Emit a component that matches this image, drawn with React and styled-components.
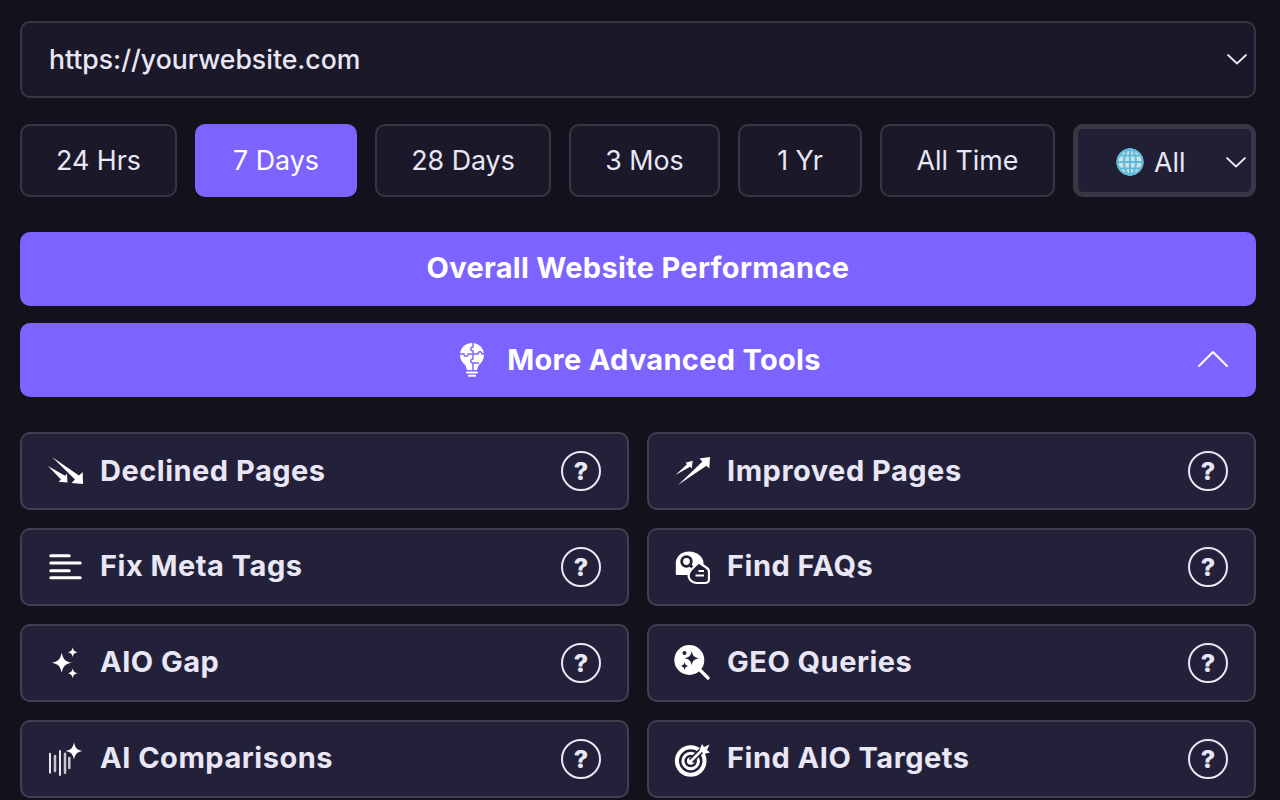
import React from "react";
import styled, { createGlobalStyle } from "styled-components";

const Global = createGlobalStyle`
  html, body { margin: 0; padding: 0; height: 800px; overflow: hidden; background: #13121c; }
  #root { height: 800px; overflow: hidden; }
  * { box-sizing: border-box; }
`;

const Page = styled.div`
  font-family: Inter, "Liberation Sans", sans-serif;
  padding: 21px 24px 0 20px;
  width: 1280px;
  display: flex;
  flex-direction: column;
  color: #e9e6f5;
`;

const UrlSelect = styled.div`
  height: 77px;
  border: 2px solid #383644;
  border-radius: 10px;
  background: #1b1929;
  display: flex;
  align-items: center;
  justify-content: space-between;
  padding: 0 5px 2px 27px;
  font-size: 26.6px;
  font-weight: 500;
  margin-bottom: 26px;
`;

const Chevron = styled.svg`
  width: 24px;
  height: 24px;
  fill: none;
  stroke: #e9e6f5;
  stroke-width: 1.8;
  stroke-linecap: round;
  stroke-linejoin: round;
  flex: none;
`;

const Ranges = styled.div`
  display: flex;
  gap: 18px;
  margin-bottom: 35px;
`;

const Range = styled.div`
  height: 73px;
  width: ${(p) => p.$w}px;
  border-radius: 10px;
  border: 2px solid ${(p) => (p.$active ? "#7d63ff" : "#383644")};
  background: ${(p) => (p.$active ? "#7d63ff" : "#1b1929")};
  color: ${(p) => (p.$active ? "#fff" : "#e9e6f5")};
  display: flex;
  align-items: center;
  justify-content: center;
  font-size: 26.8px;
  padding-bottom: 1px;
  white-space: nowrap;
`;

const Region = styled.div`
  flex: 1;
  height: 73px;
  border-radius: 10px;
  border: 5px solid #393746;
  background: #211f33;
  display: flex;
  align-items: center;
  padding: 2px 3px 0 38px;
  font-size: 26.8px;
`;

const Globe = styled.svg`
  width: 28px;
  height: 28px;
  margin-right: 10px;
  flex: none;
`;

const RegionText = styled.span`
  flex: 1;
`;

const Banner = styled.div`
  height: 74px;
  border-radius: 10px;
  background: #7d63ff;
  color: #fff;
  display: flex;
  align-items: center;
  justify-content: center;
  font-size: 29px;
  font-weight: 700;
  letter-spacing: 0.3px;
  padding-bottom: ${(p) => p.$pb}px;
  margin-bottom: ${(p) => p.$mb}px;
  position: relative;
`;

const BulbIcon = styled.svg`
  width: 30px;
  height: 36px;
  margin-right: 20px;
  margin-left: 2px;
  margin-top: 2px;
  flex: none;
`;

const Collapse = styled.svg`
  position: absolute;
  right: 27px;
  top: 26px;
  width: 32px;
  height: 20px;
  fill: none;
  stroke: #fff;
  stroke-width: 2;
  stroke-linecap: round;
  stroke-linejoin: round;
`;

const Tools = styled.div`
  display: grid;
  grid-template-columns: 1fr 1fr;
  column-gap: 18px;
  row-gap: 17.9px;
`;

const Tool = styled.div`
  height: 78px;
  border: 2px solid #413f50;
  border-radius: 10px;
  background: #232139;
  display: flex;
  align-items: center;
  padding: 0 26px 0 25px;
  color: #e9e6f5;
  font-size: 29px;
  font-weight: 700;
  letter-spacing: 0.5px;
`;

const ToolIcon = styled.svg`
  width: 36px;
  height: 36px;
  margin-right: 17px;
  flex: none;
  color: #fff;
`;

const ToolName = styled.span`
  flex: 1;
  white-space: nowrap;
  padding-bottom: 2px;
`;

const Help = styled.div`
  width: 40px;
  height: 40px;
  border: 2px solid #e9e6f5;
  border-radius: 50%;
  display: flex;
  align-items: center;
  justify-content: center;
  font-size: 25px;
  font-weight: 800;
  letter-spacing: 0;
  flex: none;
`;

const star = (cx, cy, r) => {
  const k = r * 0.16;
  return `M${cx} ${cy - r} C${cx + k} ${cy - k * 2} ${cx + k * 2} ${cy - k} ${cx + r} ${cy} C${cx + k * 2} ${cy + k} ${cx + k} ${cy + k * 2} ${cx} ${cy + r} C${cx - k} ${cy + k * 2} ${cx - k * 2} ${cy + k} ${cx - r} ${cy} C${cx - k * 2} ${cy - k} ${cx - k} ${cy - k * 2} ${cx} ${cy - r}Z`;
};

const icons = {
  declined: (
    <g fill="currentColor" stroke="none">
      <path d="M5 4 L32 22.500 L35.700 19 L36 31 L24.500 30 L28 26.500 Z" />
      <path d="M1 13 L18 22.700 L20 20.700 L20.500 29.500 L11.500 28.700 L14 26.500 Z" />
    </g>
  ),
  improved: (
    <g fill="currentColor" stroke="none">
      <path d="M36 4 L35.300 15.500 L32.500 12.700 L4 32 L28.500 8.500 L25.500 5.500 Z" />
      <path d="M18.700 7.700 L17.700 15.500 L16 13.800 L1.500 22 L13 11.300 L11.500 9.700 Z" />
    </g>
  ),
  meta: (
    <g fill="currentColor" stroke="none">
      <rect x="2.300" y="5.200" width="21.400" height="3" rx="1.500" />
      <rect x="2.300" y="12.500" width="32.400" height="3" rx="1.500" />
      <rect x="2.300" y="20.200" width="21.400" height="3" rx="1.500" />
      <rect x="2.300" y="27.200" width="32.400" height="3" rx="1.500" />
    </g>
  ),
  faq: (
    <g>
      <path d="M15 2.500 C7 2.500 1.800 8 1.800 14 V25 C1.800 25.800 2.200 26 3 26 H15 C24 26 29.500 21 29.500 14 C29.500 8 23 2.500 15 2.500Z" fill="currentColor" />
      <circle cx="12.500" cy="12.500" r="4.800" fill="none" stroke="#232139" strokeWidth="2.800" />
      <path d="M15 15 L19 19" stroke="#232139" strokeWidth="2.800" />
      <path d="M25 13.500 L33 19 C34.500 20 35 21 35 23 V30 C35 32.500 33.500 34 31 34 H23 C17 34 13.500 29 15 24.500 C16 21 19 19 22 16 Z" fill="#232139" stroke="currentColor" strokeWidth="2.200" strokeLinejoin="round" />
      <path d="M24.500 22 H30 M21.500 26.500 H30" stroke="currentColor" strokeWidth="2" />
    </g>
  ),
  spark: (
    <g fill="currentColor" stroke="none">
      <path d={star(14.7, 17.7, 10)} />
      <path d={star(25.7, 7.3, 5)} />
      <path d={star(25.7, 28.3, 5)} />
    </g>
  ),
  geo: (
    <g>
      <circle cx="15.300" cy="15" r="15" fill="currentColor" />
      <path d="M26 25 L34 33" stroke="currentColor" strokeWidth="3.200" strokeLinecap="round" />
      <path d={star(17.7, 13.3, 7)} fill="#232139" />
      <path d={star(10.5, 21, 4)} fill="#232139" />
      <circle cx="10.500" cy="8" r="2" fill="#232139" />
    </g>
  ),
  compare: (
    <g stroke="currentColor" fill="none" strokeLinecap="round">
      <path d="M3 12.700 V31.700" strokeWidth="1.800" />
      <path d="M8 15 V30" strokeWidth="2.500" opacity=".75" />
      <path d="M13 10 V34" strokeWidth="1.800" />
      <path d="M18 12.700 V31.700" strokeWidth="2.500" opacity=".75" />
      <path d="M22.300 17 V27" strokeWidth="2.500" opacity=".75" />
      <path d={star(27, 10, 8.500)} fill="currentColor" stroke="none" />
    </g>
  ),
  target: (
    <g>
      <circle cx="16.700" cy="20" r="15.800" fill="currentColor" />
      <circle cx="16.700" cy="20" r="10.500" fill="none" stroke="#232139" strokeWidth="2.500" />
      <circle cx="16.700" cy="20" r="5" fill="none" stroke="#232139" strokeWidth="2.500" />
      <path d="M17 20 L30 7" stroke="#232139" strokeWidth="6" />
      <path d="M17 20 L29 8" stroke="currentColor" strokeWidth="2.500" strokeLinecap="round" />
      <path d="M25.500 9 L28 3 L30 6 L35.500 3.500 L33 9 L36 11.500 L30 13 Z" fill="currentColor" />
    </g>
  ),
};

const Icon = ({ name }) => <ToolIcon viewBox="0 0 36 36">{icons[name]}</ToolIcon>;

const ranges = [
  ["24 Hrs", 157],
  ["7 Days", 162, true],
  ["28 Days", 176],
  ["3 Mos", 151],
  ["1 Yr", 124],
  ["All Time", 175],
];

const tools = [
  ["declined", "Declined Pages"],
  ["improved", "Improved Pages"],
  ["meta", "Fix Meta Tags"],
  ["faq", "Find FAQs"],
  ["spark", "AIO Gap"],
  ["geo", "GEO Queries"],
  ["compare", "AI Comparisons"],
  ["target", "Find AIO Targets"],
];

export default function App() {
  return (
    <>
      <Global />
      <Page>
        <UrlSelect>
          <span>https://yourwebsite.com</span>
          <Chevron viewBox="0 0 24 24"><path d="M3 8 L12 16.500 L21 8" /></Chevron>
        </UrlSelect>
        <Ranges>
          {ranges.map(([label, w, active]) => (
            <Range key={label} $w={w} $active={active}>{label}</Range>
          ))}
          <Region>
            <Globe viewBox="0 0 28 28">
              <circle cx="14" cy="14" r="13.500" fill="#d8dde0" />
              <g fill="none" stroke="#58bcdc" strokeWidth="2">
                <circle cx="14" cy="14" r="12.500" />
                <ellipse cx="14" cy="14" rx="6" ry="13" />
                <path d="M14 1 V27 M1 14 H27 M3 7.500 H25 M3 20.500 H25" />
              </g>
            </Globe>
            <RegionText>All</RegionText>
            <Chevron viewBox="0 0 24 24"><path d="M3 8 L12 16.500 L21 8" /></Chevron>
          </Region>
        </Ranges>
        <Banner $mb={17} $pb={3}>Overall Website Performance</Banner>
        <Banner $mb={35} $pb={2}>
          <BulbIcon viewBox="0 0 30 36">
            <path d="M15 1 C8 1 3 6 3 13 C3 17 5 20 8 23 C9 24.500 9.500 26 10 28 H20 C20.500 26 21 24.500 22 23 C25 20 27 17 27 13 C27 6 22 1 15 1Z" fill="#fff" />
            <path d="M16 1 V5 C13 5 13 9 16 9 V12 H21 C21 9 25 9 25 12 H27 M16 12 H11 C11 15 7 15 7 12 H3 M16 12 V17 C13 17 13 21 16 21 V28 M16 21 H22" fill="none" stroke="#7d63ff" strokeWidth="1.400" />
            <path d="M10 30.500 H20 M12 33.800 H18" stroke="#fff" strokeWidth="2" strokeLinecap="round" />
          </BulbIcon>
          More Advanced Tools
          <Collapse viewBox="0 0 32 20"><path d="M2 17 L16 3 L30 17" /></Collapse>
        </Banner>
        <Tools>
          {tools.map(([icon, name]) => (
            <Tool key={name}>
              <Icon name={icon} />
              <ToolName>{name}</ToolName>
              <Help>?</Help>
            </Tool>
          ))}
        </Tools>
      </Page>
    </>
  );
}
